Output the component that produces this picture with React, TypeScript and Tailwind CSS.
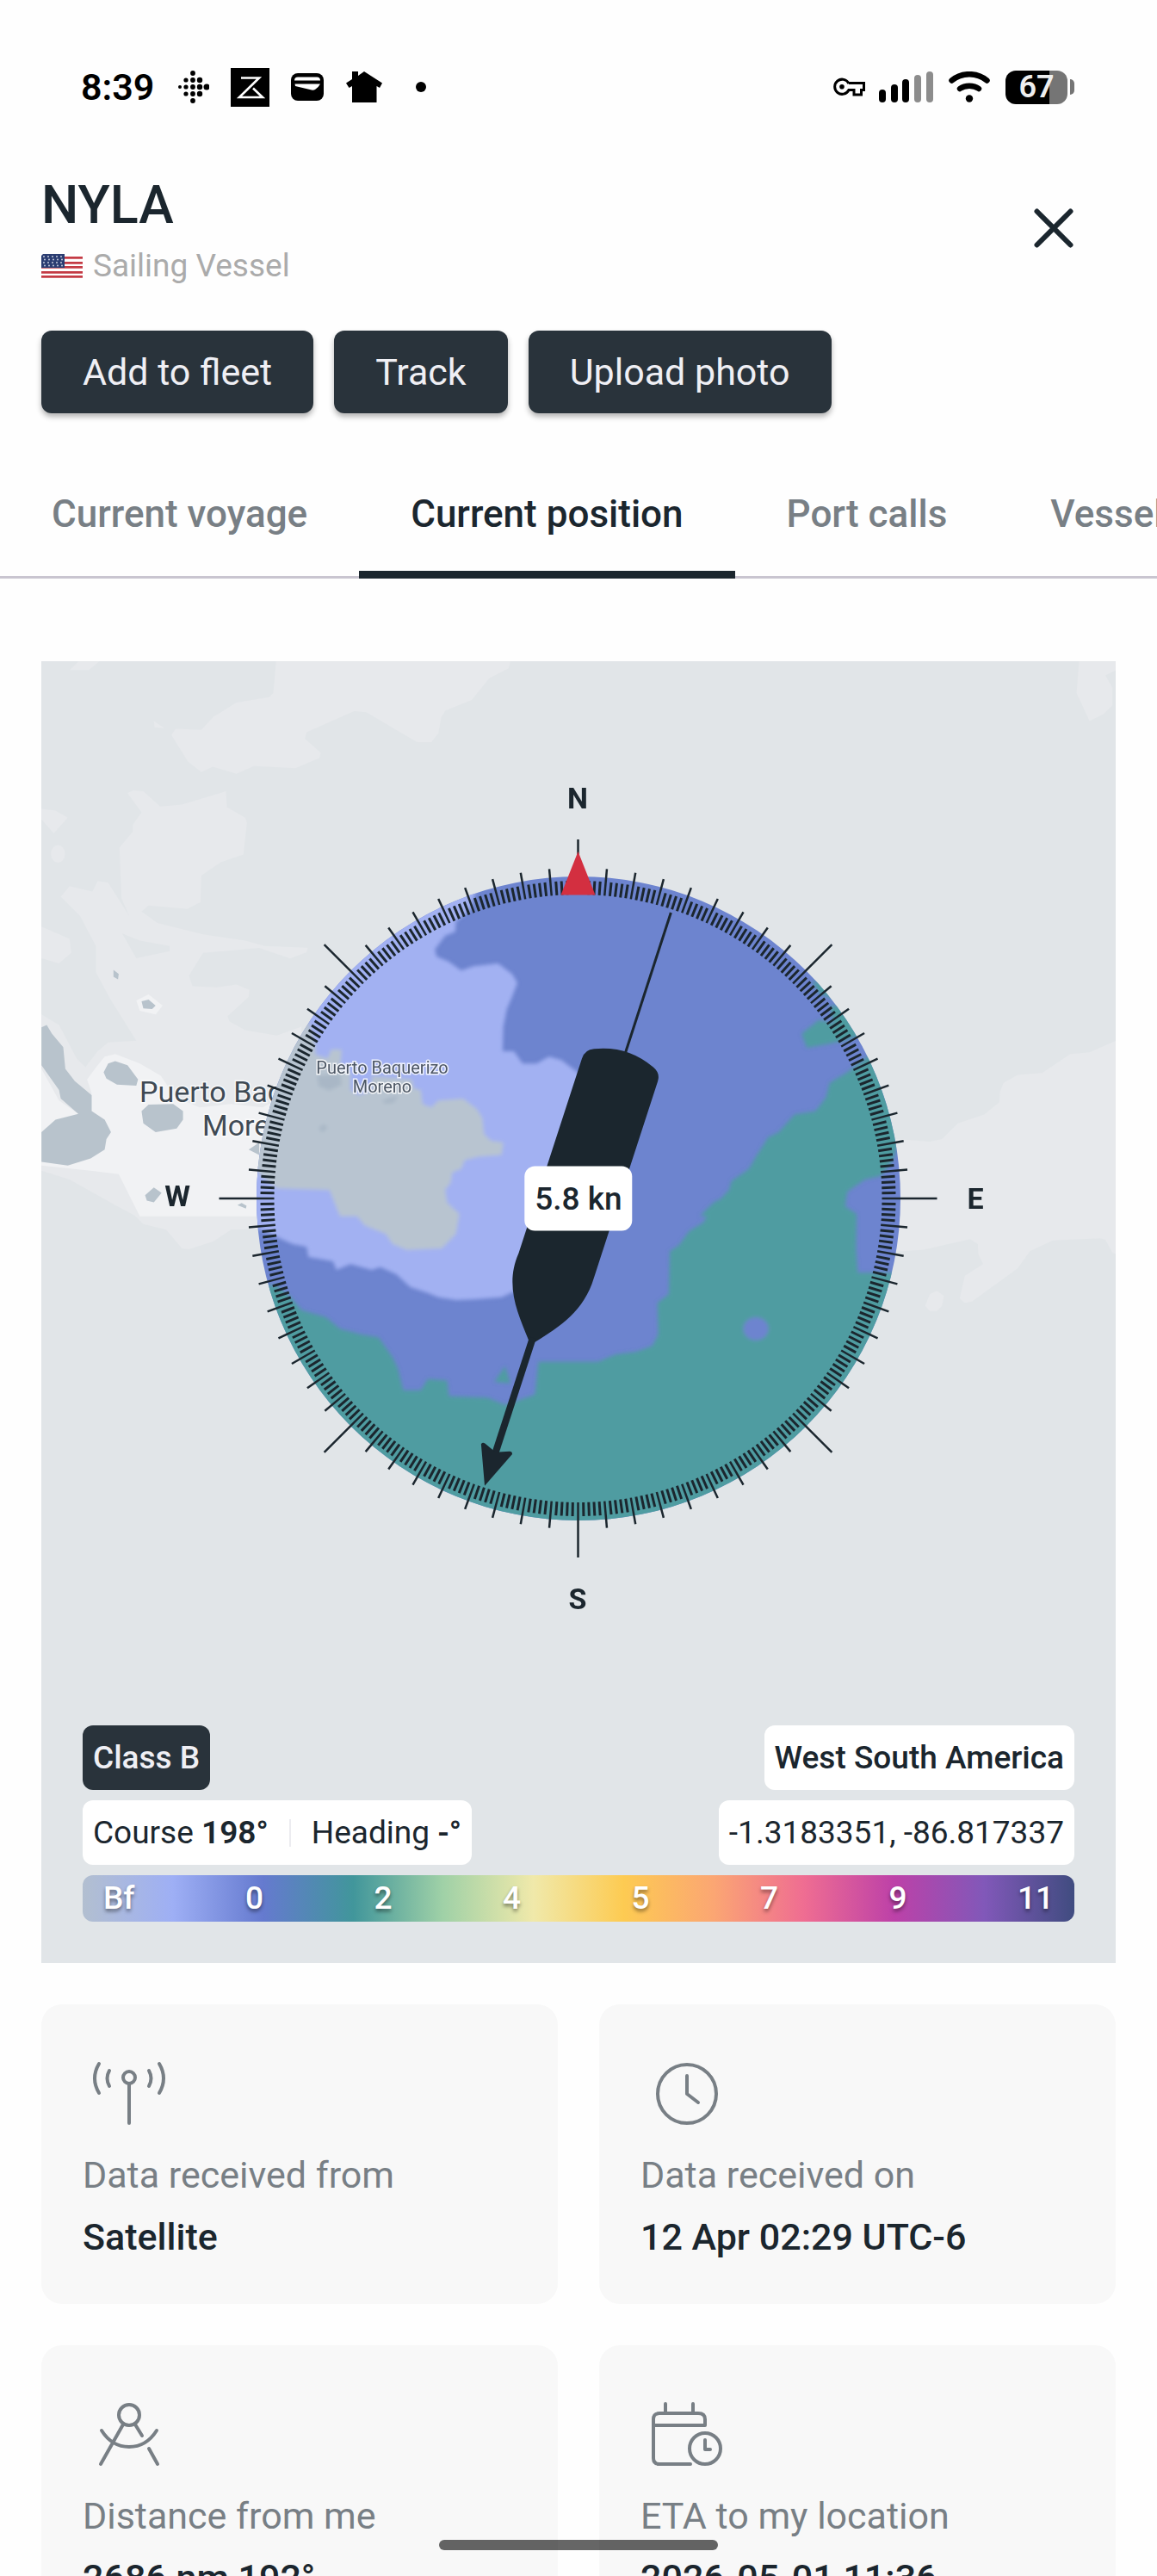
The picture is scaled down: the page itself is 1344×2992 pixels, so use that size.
import type { ReactNode } from "react";

const tabs = ["Current voyage", "Current position", "Port calls", "Vessel particulars"];
const actions = ["Add to fleet", "Track", "Upload photo"];
const beaufort = ["Bf", "0", "2", "4", "5", "7", "9", "11"];

// Transforms of the four map tiles
const NW = "translate(-8 -8) scale(0.408)";
const NE = "translate(622 -8) scale(0.408)";
const SW = "translate(-8 622) scale(0.408 0.3333)";
const SE = "translate(622 622) scale(0.408 0.3333)";

const StatusBar = () => (
  <div className="flex h-[202px] items-center justify-between pl-[94px] pr-24 text-black">
    <div className="flex items-center">
      <span className="w-[85px] text-[43px] leading-none font-semibold">8:39</span>
      <svg className="ml-7 h-10 w-9" viewBox="0 0 36 40">
        <circle cx="2" cy="20" r="2" />
        {[12, 20, 28].map((y) => (
          <circle key={y} cx="9" cy={y} r="2.6" />
        ))}
        {[4, 12, 20, 28, 36].map((y) => (
          <circle key={y} cx="17" cy={y} r="2.9" />
        ))}
        {[12, 20, 28].map((y) => (
          <circle key={y} cx="25" cy={y} r="3.2" />
        ))}
        <circle cx="33" cy="20" r="3.5" />
      </svg>
      <svg className="ml-[25px] h-[45px] w-[45px]" viewBox="0 0 45 45">
        <path d="M0 0h45v45H0z" />
        <path d="M12 11.500H33L10 34H37L26 23.500" fill="none" stroke="#fff" strokeWidth="2.600" />
      </svg>
      <svg className="ml-[25px] h-8 w-[38px]" viewBox="0 0 38 32">
        <rect width="38" height="32" rx="8" />
        <path d="M4 8.500q0-4 4-4h22q4 0 4 4zM4.500 12.500h29.500q-2 4-6 6.500-2 1-4 .500L5 15z" fill="#fff" />
      </svg>
      <svg className="ml-[26px] h-9 w-[42px]" viewBox="0 0 42 36">
        <path d="M21 0 42 13.500 39 19 35.500 17V36H7V17L3.500 19 0 13.500 7 9V0h7v5z" />
      </svg>
      <span className="ml-[39px] h-3 w-3 rounded-full bg-black" />
    </div>
    <div className="flex items-center">
      <svg className="mr-4 h-[22px] w-[37px]" viewBox="0 0 37 22" fill="none" stroke="#000" strokeWidth="3">
        <path d="M18 7A8.600 8.600 0 1 0 18 14.500H24V20H32.500V14.500H35.500V6.500H18" />
        <circle cx="10" cy="10.800" r="2.800" fill="#000" stroke="none" />
      </svg>
      <svg className="mr-[18px] h-9 w-[63px]" viewBox="0 0 63 36">
        <rect x="0" y="21" width="8" height="15" rx="4" />
        <rect x="14" y="15" width="8" height="21" rx="4" />
        <rect x="27" y="9" width="8" height="27" rx="4" />
        <rect x="41" y="4" width="8" height="32" rx="4" fill="#8c8c8c" />
        <rect x="55" y="0" width="8" height="36" rx="4" fill="#8c8c8c" />
      </svg>
      <svg className="mr-[18px] h-9 w-12" viewBox="0 0 48 36" fill="none" stroke="#000" strokeWidth="6.500" strokeLinecap="round">
        <path d="M3.500 10.500C15 .700 33 .700 44.500 10.500M13 20c6-4.500 16-4.500 22 0" />
        <circle cx="24" cy="31.500" r="4.200" fill="#000" stroke="none" />
      </svg>
      <div className="flex h-[39px] w-[72px] items-center justify-center rounded-xl bg-[linear-gradient(90deg,#000_71%,#757575_71%)] text-[36px] leading-none font-semibold text-[#eee]">
        67
      </div>
      <span className="ml-[3px] h-[18px] w-[5px] rounded-r-full bg-[#757575]" />
    </div>
  </div>
);

const Flag = () => (
  <svg className="h-7 w-12" viewBox="0 0 48 28">
    <rect width="48" height="28" rx="2" fill="#fff" />
    {[3, 9, 14, 20, 25].map((y) => (
      <path key={y} d={`M0 ${y}h48v2.800H0z`} fill="#c43b45" />
    ))}
    <path d="M2 0H27V16H0V2z" fill="#2b3d72" />
    {[3, 6.5, 10, 13.5].map((y, row) =>
      [3, 8, 13, 18, 23].map((x) => <circle key={`${x}-${y}`} cx={x + (row % 2)} cy={y} r="0.9" fill="#d5dae8" />)
    )}
  </svg>
);

const Seabed = () => (
  <>
    <rect width="1248" height="1512" fill="#e1e5e8" />
    <g fill="#e7e9ec">
      <g transform={NW}>
        <path d="M688 20L680 110 668 122 575 137 510 178 475 215 402 212 390 230 437 305 475 335 508 320 575 340 625 318 743 324 812 295 815 280 770 240 775 222 910 162 945 165 1030 215 1090 250 1130 250 1150 225 1158 180 1170 160 1245 130 1295 68 1350 40 1355 20Z" />
        <path
          fillRule="evenodd"
          d="M265 395L280 387 310 390 358 433 420 428 545 390 548 435 600 465 605 480 595 570 530 592 475 630 473 705 435 725 325 715 305 732 350 765 480 797 600 815 655 830 778 835 775 848 728 866 640 836 480 850 440 915 450 945 520 948 575 940 612 955 610 975 550 1030 555 1045 600 1070 690 1085 760 1060 760 1600 290 1600 230 1568 180 1540 100 1495 20 1470 20 1025 70 1055 120 1150 145 1175 180 1130 210 1105 290 1100 215 980 175 905 175 830 130 745 75 690 100 660 165 675 180 645 210 650 270 745 248 695 242 550 280 505 280 485 305 450ZM250 795L300 815 385 830 385 845 290 865Z"
        />
        <path d="M20 440L60 445 95 465 55 510 20 470ZM20 775L100 810 105 850 70 880 20 865ZM100 45L125 20 185 20 155 45ZM340 190L370 210 342 208Z" />
        <ellipse cx="67" cy="568" rx="20" ry="25" />
      </g>
      <g transform={NE}>
        <path d="M1430 20L1423 110 1460 190 1500 170 1525 145 1525 95 1505 60 1535 45 1535 20ZM1535 1100L1460 1133 1405 1138 1325 1192 1255 1197 1215 1220 1205 1245 1203 1275 1160 1310 1085 1335 1040 1380 1005 1387 850 1375 850 1600 1535 1600Z" />
      </g>
      <g transform={SW}>
        <path d="M215 -20L310 95 375 115 420 180 440 183 510 155 560 115 680 110 680 -20Z" />
      </g>
      <g transform={SE}>
        <path d="M850 -20H1535V200L1525 195 1505 150 1490 145 1355 152 1290 190 1255 250 1125 365 1105 370 1090 355 1105 275 1157 235 1143 200 1142 165 1120 148 985 185 850 195ZM992 380L1005 340 1025 328 1045 345 1040 380 1025 398 1005 398Z" />
      </g>
    </g>
    <g fill="#f1f2f4">
      <g transform={NW}>
        <path d="M20 1180L70 1270 125 1308 163 1250 150 1210 180 1170 200 1145 230 1138 300 1165 360 1200 400 1260 470 1290 560 1280 650 1290 720 1250 700 1600 300 1600 240 1480 160 1470 20 1455Z" />
        <path d="M290 985L325 968 365 1000 345 1025 300 1015Z" />
      </g>
      <g transform={SW}>
        <path d="M280 -20L290 20 340 60 430 65 500 50 530 60 680 60 680 -20Z" />
      </g>
    </g>
    <g fill="#b8c3cc">
      <g transform={NW}>
        <path d="M20 1062L35 1055 50 1080 82 1118 88 1180 115 1215 163 1255 163 1300 200 1325 218 1360 205 1380 200 1410 160 1435 95 1455 20 1445 20 1360 60 1325 125 1308 75 1265 70 1240 20 1170Z" />
        <path d="M197 1190L210 1165 230 1158 265 1170 295 1210 290 1228 235 1225 205 1208ZM305 1300L325 1282 395 1280 423 1300 423 1325 405 1350 345 1360 310 1335Z" />
        <path d="M305 988L325 983 345 1000 335 1010 310 1008ZM225 898L240 910 238 925 225 918ZM610 1410L640 1390 640 1425ZM315 1540L340 1518 362 1533 340 1560 320 1555ZM578 1568L590 1562 604 1570 602 1578Z" />
      </g>
    </g>
  </>
);

const WindField = () => (
  <g clipPath="url(#dial)">
    <rect x="240" y="240" width="768" height="768" fill="#6d84cf" />
    <g filter="url(#soft)">
      <g fill="#a2b1f2">
        <path
          transform={NW}
          d="M1255 680L1240 730 1200 760 1198 790 1170 800 1140 840 1145 860 1180 875 1215 900 1250 888 1320 880 1360 910 1375 935 1360 975 1345 1010 1335 1060 1333 1130 1365 1130 1390 1165 1430 1165 1465 1145 1500 1155 1560 1200 1560 1600 500 1600 500 600 1265 600Z"
        />
        <path
          transform={SW}
          d="M500 -30V110H635L690 140 735 165 775 175 780 210 850 225 860 255 900 235 960 255 985 245 1030 270 1070 315 1120 335 1150 350 1200 360 1250 358 1330 350 1365 330 1450 320 1500 120 1500 -30Z"
        />
      </g>
      <g fill="#b8c4d0">
        <path
          transform={NW}
          d="M780 1045L800 1110 800 1140 835 1150 845 1125 875 1125 870 1180 900 1190 900 1240 925 1255 960 1240 960 1200 1075 1210 1080 1235 1100 1240 1105 1280 1130 1290 1150 1270 1220 1265 1260 1295 1275 1320 1280 1365 1300 1385 1335 1390 1330 1425 1265 1430 1225 1440 1215 1465 1190 1475 1185 1505 1165 1530 1175 1600 870 1600 840 1525 690 1520 640 1480 600 1400 600 1200 700 1045Z"
        />
        <path transform={SW} d="M850 -20L870 40 910 55 940 100 1000 130 1020 165 1060 185 1160 180 1200 130 1210 60 1175 20 1170 -20Z" />
      </g>
      <g fill="#4f9ca1">
        <path
          transform={NE}
          d="M655 1120L640 1080 690 1040 730 1050 720 1000 760 1000 850 1050 810 1085 760 1100 710 1110ZM670 930L740 940 740 985 690 965ZM860 1120L770 1190 720 1220 710 1260 680 1300 620 1310 575 1360 545 1375 510 1430 490 1465 440 1500 430 1540 390 1560 350 1600 760 1600 770 1530 820 1495 865 1485 900 1440 920 1380 1000 1380 1000 1100Z"
        />
        <path
          transform={SE}
          d="M430 -20L380 50 360 90 320 120 290 170 265 190 262 340 230 370 232 480 215 520 170 540 110 550 60 575 0 580 -20 580 -20 1300 1000 1300 1000 265 800 265 795 180 797 60 760 30 755 -20Z"
        />
        <path
          transform={SW}
          d="M1600 575L1435 575 1425 690 1340 725 1290 700 1180 695 1175 640 1120 635 1100 675 1050 675 1035 600 1020 560 980 490 930 480 870 460 830 420 760 395 730 350 690 310 600 305 600 1300 1600 1300ZM1310 645L1340 590 1355 650Z"
        />
      </g>
      <ellipse transform={SE} cx="510" cy="460" rx="36" ry="40" fill="#6d84cf" />
      <g fill="#a9b7c6" transform={NW}>
        <path d="M805 1200L870 1195 875 1225 840 1242 810 1230ZM808 1350L825 1337 835 1348 820 1360ZM990 1270L1035 1255 1025 1275 1000 1280Z" />
      </g>
    </g>
  </g>
);

const Compass = () => (
  <>
    <g stroke="#1b262e">
      {Array.from({ length: 360 }, (_, deg) => {
        const outer = deg % 45 === 0 ? 417 : deg % 5 === 0 ? 384 : 369;
        return (
          <line
            key={deg}
            x1="0"
            x2="0"
            y1={-353}
            y2={-outer}
            strokeWidth={deg % 5 === 0 ? 2.5 : 3}
            transform={`translate(623.5 624) rotate(${deg})`}
          />
        );
      })}
    </g>
    <path d="M623.500 221L643.500 271.500H603.500Z" fill="#d32f40" />
    <g className="text-[34px] font-bold" fill="#1b262e" textAnchor="middle">
      <text x="623" y="171">N</text>
      <text x="1085" y="636">E</text>
      <text x="623" y="1101">S</text>
      <text x="158" y="633">W</text>
    </g>
    {/* vessel on course 198° */}
    <g transform="translate(623.5 624) rotate(18)" fill="#1b262e">
      <path d="M0 -349V-178" stroke="#1b262e" strokeWidth="3" />
      <path d="M-46 -156Q-46 -167-36 -171Q0 -187 36 -172Q46 -168 46 -158V82C47 122 26 148 4 174H-4C-26 148-50 122-46 82Z" />
      <path d="M0 170V312" stroke="#1b262e" strokeWidth="8" />
      <path d="M0 351L-19 306Q-18 303-15 304L0 310 15 304Q18 303 19 306Z" />
    </g>
  </>
);

const PositionMap = () => (
  <section className="relative mx-12 mt-24 overflow-hidden">
    <svg className="block w-full" viewBox="0 0 1248 1512">
      <defs>
        <clipPath id="dial">
          <circle cx="624" cy="624" r="374" />
        </clipPath>
        <filter id="soft">
          <feGaussianBlur stdDeviation="2" />
        </filter>
      </defs>
      <Seabed />
      <g className="text-[34px]" fill="#3f4a54" stroke="#fff" strokeWidth="3" strokeOpacity="0.7" paintOrder="stroke">
        <text x="114" y="512">Puerto Baquerizo</text>
        <text x="187" y="551">Moreno</text>
      </g>
      <WindField />
      <g className="text-[20px]" fill="#4c5664" stroke="#fff" strokeWidth="3" strokeOpacity="0.8" paintOrder="stroke" textAnchor="middle">
        <text x="396" y="479">Puerto Baquerizo</text>
        <text x="396" y="501">Moreno</text>
      </g>
      <Compass />
    </svg>

    <div className="absolute top-[41.3%] left-1/2 flex h-[75px] -translate-x-1/2 -translate-y-1/2 items-center rounded-xl bg-white px-3 text-[37px] font-medium whitespace-nowrap">
      5.8 kn
    </div>

    <div className="absolute inset-x-12 bottom-12 flex flex-col gap-3 text-[37px]">
      <div className="flex justify-between font-medium">
        <div className="flex h-[75px] items-center rounded-xl bg-[#29333b] px-3 text-[#efeff4]">Class B</div>
        <div className="flex h-[75px] items-center rounded-xl bg-white px-3">West South America</div>
      </div>
      <div className="flex justify-between">
        <div className="flex h-[75px] items-center rounded-xl bg-white px-3">
          <span>
            Course <b className="font-semibold">198°</b>
          </span>
          <span className="mx-6 h-8 w-[2px] bg-[#ececf0]" />
          <span>
            Heading <b className="font-semibold">-°</b>
          </span>
        </div>
        <div className="flex h-[75px] items-center rounded-xl bg-white px-3">-1.3183351, -86.817337</div>
      </div>
      <div className="flex h-[54px] items-center justify-between rounded-xl bg-[linear-gradient(90deg,#b2bfd0,#9eaff5,#657acf,#41969b,#a0d1a7,#f0e9aa,#fdcb52,#fba673,#ef6d92,#bd41a8,#8158b9,#404c80)] px-6 font-medium text-white [text-shadow:0_3px_4px_rgba(0,0,0,0.45)]">
        {beaufort.map((force) => (
          <span key={force}>{force}</span>
        ))}
      </div>
    </div>
  </section>
);

const AntennaIcon = () => (
  <>
    <circle cx="54" cy="37" r="7" />
    <path d="M54 44V90M31 29Q26 38 31 47M77 29Q82 38 77 47M19 21Q9 38 19 55M89 21Q99 38 89 55" />
  </>
);

const ClockIcon = () => (
  <>
    <circle cx="54" cy="56" r="34" />
    <path d="M54 35V56L67 66" />
  </>
);

const DividersIcon = () => (
  <>
    <circle cx="54" cy="33" r="12" />
    <path d="M47 44L21 90M61 44L69 57M77 72L87 90M22 51Q34 70 54 70T86 51" />
  </>
);

const CalendarIcon = () => (
  <>
    <path d="M29 20V30M61 20V30M58 90H22Q15 90 15 83V38Q15 31 22 31H67Q75 31 75 38V45H15" />
    <circle cx="75" cy="72" r="18" />
    <path d="M75 62V73H81" />
  </>
);

const cards: { icon: ReactNode; label: string; value: string }[] = [
  { icon: <AntennaIcon />, label: "Data received from", value: "Satellite" },
  { icon: <ClockIcon />, label: "Data received on", value: "12 Apr 02:29 UTC-6" },
  { icon: <DividersIcon />, label: "Distance from me", value: "2686 nm 192°" },
  { icon: <CalendarIcon />, label: "ETA to my location", value: "2026-05-01 11:36" },
];

export default function App() {
  return (
    <div className="relative h-screen overflow-hidden bg-[#fefefe] font-[Roboto,sans-serif] text-[#1b262e]">
      <StatusBar />

      <header className="flex items-start justify-between px-12">
        <div>
          <h1 className="text-[61px] leading-[72px] font-medium">NYLA</h1>
          <div className="mt-2 flex items-center gap-3 text-[37px] leading-[54px] text-[#ababab]">
            <Flag />
            Sailing Vessel
          </div>
        </div>
        <button aria-label="Close" className="flex h-[126px] w-36 shrink-0 items-center justify-center">
          <svg className="h-12 w-12" viewBox="0 0 48 48" fill="none" stroke="#1b262e" strokeWidth="6" strokeLinecap="round">
            <path d="M4.500 4.500L43.500 43.500M43.500 4.500L4.500 43.500" />
          </svg>
        </button>
      </header>

      <div className="mt-12 flex gap-6 px-12">
        {actions.map((action) => (
          <button
            key={action}
            className="h-24 rounded-xl bg-[#29333b] px-12 text-[43px] text-[#efeff4] shadow-[0_4px_6px_rgba(0,0,0,0.3)]"
          >
            {action}
          </button>
        ))}
      </div>

      <nav className="mt-12 flex overflow-hidden">
        {tabs.map((tab) => (
          <button
            key={tab}
            className={`relative h-36 shrink-0 border-b-[3px] border-[#c9c5d0] px-15 pb-1 text-[44px] font-medium whitespace-nowrap ${
              tab === "Current position" ? "text-[#1b262e]" : "text-[#787f85]"
            }`}
          >
            {tab}
            {tab === "Current position" && <span className="absolute inset-x-0 -bottom-[3px] h-[9px] bg-[#1b262e]" />}
          </button>
        ))}
      </nav>

      <PositionMap />

      <div className="mt-12 grid grid-cols-2 gap-12 px-12">
        {cards.map((card) => (
          <div key={card.label} className="rounded-3xl bg-[#f8f8f8] p-12 text-[43px] leading-[60px]">
            <svg
              className="mb-3 h-27 w-27"
              viewBox="0 0 108 108"
              fill="none"
              stroke="#787f85"
              strokeWidth="4"
              strokeLinecap="round"
              strokeLinejoin="round"
            >
              {card.icon}
            </svg>
            <p className="text-[#787f85]">{card.label}</p>
            <p className="mt-3 font-medium">{card.value}</p>
          </div>
        ))}
      </div>

      <div className="absolute bottom-[30px] left-1/2 h-3 w-81 -translate-x-1/2 rounded-full bg-black/60" />
    </div>
  );
}
